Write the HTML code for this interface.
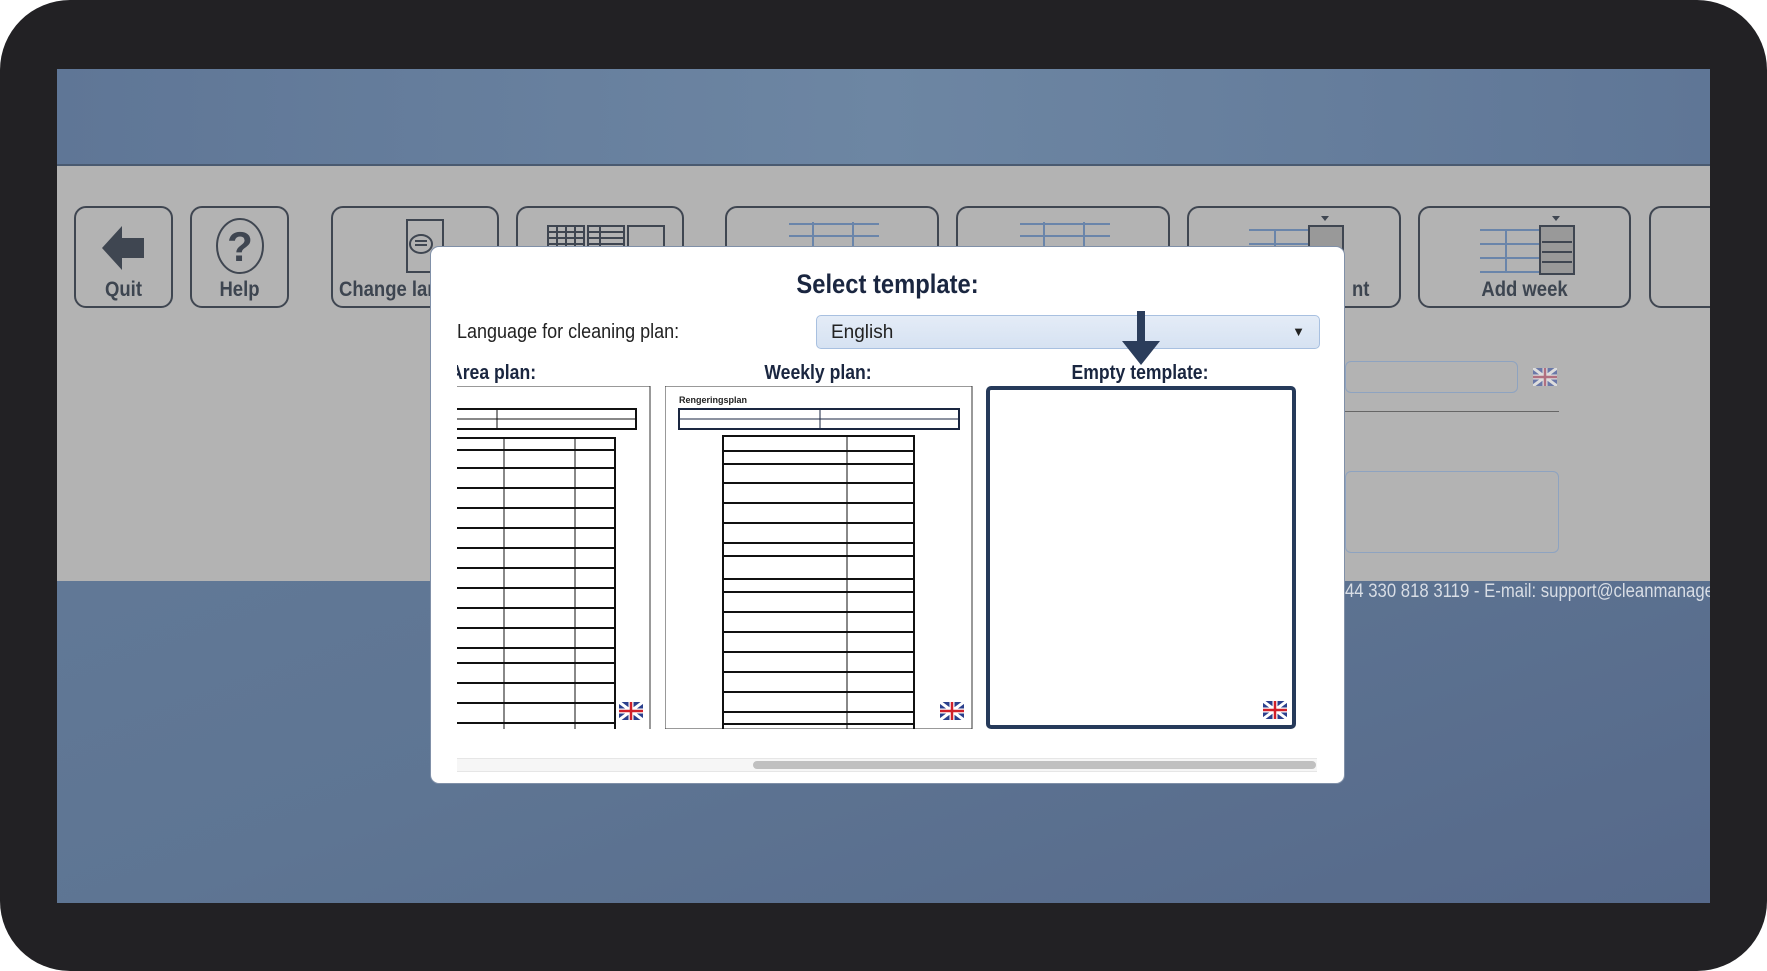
<!DOCTYPE html>
<html><head><meta charset="utf-8"><style>
*{margin:0;padding:0;box-sizing:border-box}
body{width:1767px;height:971px;overflow:hidden;background:#fff;font-family:"Liberation Sans",sans-serif;position:relative}
.frame{position:absolute;left:0;top:0;width:1767px;height:971px;background:#222124;border-radius:70px}
.screen{position:absolute;left:57px;top:69px;width:1653px;height:834px;overflow:hidden;background:linear-gradient(160deg,#667d9b 0%,#5e7593 60%,#56698a 100%)}
.hdr{position:absolute;left:0;top:0;width:100%;height:97px;background:linear-gradient(90deg,#5f7696,#6d86a3 50%,#5f7696);border-bottom:2px solid #4a5a70}
.gray{position:absolute;left:0;top:97px;width:100%;height:415px;background:#b3b3b3}
.btn{position:absolute;top:137px;height:102px;border:2px solid #3f4651;border-radius:12px;color:#3d4550;font-weight:bold;font-size:21px;text-align:center}
.btn span{position:absolute;bottom:4px;left:0;right:0;white-space:nowrap;transform:scaleX(0.88)}
.foot{position:absolute;left:1288px;top:512px;color:#d8dde5;font-size:19px;white-space:nowrap;transform:scaleX(0.88);transform-origin:left}
.modal{position:absolute;left:430px;top:246px;width:915px;height:538px;background:#fff;border-radius:9px;border:1px solid #8090a8}
.t{position:absolute;color:#1a2640;font-weight:bold;white-space:nowrap}
</style></head><body>
<div class="frame"></div>
<div class="screen">
 <div class="hdr"></div>
 <div class="gray"></div>
 <div class="btn" style="left:17px;width:99px"><svg width="60" height="60" style="margin-top:10px" viewBox="0 0 60 60"><path d="M8 30 L28 8 L28 20 L50 20 L50 40 L28 40 L28 52Z" fill="#3f4651"/></svg><span>Quit</span></div>
 <div class="btn" style="left:133px;width:99px"><svg width="60" height="60" style="margin-top:8px" viewBox="0 0 60 60"><ellipse cx="30" cy="30" rx="23" ry="27" fill="none" stroke="#3f4651" stroke-width="2"/><text x="30" y="45" text-anchor="middle" font-size="42" font-weight="bold" fill="#3f4651" font-family="Liberation Sans">?</text></svg><span>Help</span></div>
 <div class="btn" style="left:274px;width:168px"><svg width="44" height="60" style="margin-top:8px;margin-left:20px" viewBox="0 0 44 60"><rect x="4" y="4" width="36" height="52" fill="none" stroke="#3f4651" stroke-width="2"/><ellipse cx="18" cy="28" rx="11" ry="9" fill="none" stroke="#3f4651" stroke-width="2"/><path d="M12 25h12M12 29h12" stroke="#3f4651" stroke-width="2"/></svg><span style="text-align:left;left:6px;transform-origin:left">Change language</span></div>
 <div class="btn" style="left:459px;width:168px"><svg width="140" height="40" viewBox="0 0 140 40" style="margin-top:6px"><g fill="none" stroke="#3f4651" stroke-width="2"><rect x="18" y="12" width="36" height="30"/><rect x="58" y="12" width="36" height="30"/><rect x="98" y="12" width="36" height="30"/><path d="M18 18h36M18 24h36M18 30h36M27 12v30M36 12v30M45 12v30M58 18h36M58 24h36M58 30h36M70 12v30"/></g></svg></div>
 <div class="btn" style="left:668px;width:214px"><svg width="110" height="40" viewBox="0 0 110 40" style="margin-top:6px"><g stroke="#6a85aa" stroke-width="2"><path d="M12 10h90M12 22h90M12 34h90M36 8v32M76 8v32"/></g></svg></div>
 <div class="btn" style="left:899px;width:214px"><svg width="110" height="40" viewBox="0 0 110 40" style="margin-top:6px"><g stroke="#6a85aa" stroke-width="2"><path d="M12 10h90M12 22h90M12 34h90M36 8v32M76 8v32"/></g></svg></div>
 <div class="btn" style="left:1130px;width:214px"><svg width="110" height="40" viewBox="0 0 110 40" style="margin-top:4px"><g stroke="#6a85aa" stroke-width="2"><path d="M10 18h60M10 32h60M36 18v22"/></g><rect x="70" y="14" width="34" height="30" fill="#999" stroke="#3f4651" stroke-width="2"/><path d="M82 4h8l-4 5z" fill="#3f4651"/></svg><span style="left:160px;text-align:left">nt</span></div>
 <div class="btn" style="left:1361px;width:213px"><svg width="110" height="64" viewBox="0 0 110 64" style="margin-top:4px"><g stroke="#6a85aa" stroke-width="2"><line x1="10" y1="18" x2="70" y2="18"/><line x1="10" y1="32" x2="70" y2="32"/><line x1="10" y1="46" x2="70" y2="46"/><line x1="10" y1="60" x2="70" y2="60"/><line x1="36" y1="18" x2="36" y2="60"/></g><rect x="70" y="14" width="34" height="48" fill="#999" stroke="#3f4651" stroke-width="2"/><path d="M72 30h30M72 40h30M72 50h30" stroke="#3f4651" stroke-width="2"/><path d="M82 4h8l-4 5z" fill="#3f4651"/></svg><span>Add week</span></div>
 <div class="btn" style="left:1592px;width:100px"></div>
 <div style="position:absolute;left:1288px;top:292px;width:173px;height:32px;border:1px solid #8ea3c0;border-radius:6px"></div>
 <svg style="position:absolute;left:1476px;top:299px" width="24" height="18"><rect width="24" height="18" fill="#6a78a8"/><path d="M0 0l24 18M24 0L0 18" stroke="#ddd" stroke-width="3"/><path d="M12 0v18M0 9h24" stroke="#ddd" stroke-width="5"/><path d="M12 0v18M0 9h24" stroke="#b07080" stroke-width="2.5"/></svg>
 <div style="position:absolute;left:1288px;top:342px;width:214px;height:1px;background:#666"></div>
 <div style="position:absolute;left:1288px;top:402px;width:214px;height:82px;border:1px solid #8ea3c0;border-radius:6px"></div>
 <div class="foot">44 330 818 3119 - E-mail: support@cleanmanagement</div>
</div>
<div class="modal">
 <div class="t" style="left:0;right:0;text-align:center;top:22px;font-size:27px;transform:scaleX(0.88)">Select template:</div>
 <div style="position:absolute;left:26px;top:74px;font-size:20px;color:#222;transform:scaleX(0.9);transform-origin:left">Language for cleaning plan:</div>
 <div style="position:absolute;left:385px;top:68px;width:504px;height:34px;background:linear-gradient(#e4ecf7,#d6e2f2);border:1px solid #a8c0e0;border-radius:5px;font-size:19px;color:#222;padding:6px 14px">English<span style="position:absolute;right:14px;top:8px;font-size:13px">▼</span></div>
 <svg style="position:absolute;left:690px;top:64px" width="40" height="56" viewBox="0 0 40 56"><rect x="16" y="0" width="8" height="32" fill="#2b3d5b"/><path d="M1 30h38l-19 24z" fill="#2b3d5b"/></svg>
 <div style="position:absolute;left:26px;top:112px;width:150px;height:28px;overflow:hidden"><div class="t" style="left:-7px;top:3px;font-size:20px;transform:scaleX(0.88);transform-origin:left">Area plan:</div></div>
 <div class="t" style="left:287px;width:200px;text-align:center;top:115px;font-size:20px;transform:scaleX(0.88)">Weekly plan:</div>
 <div class="t" style="left:559px;width:300px;text-align:center;top:115px;font-size:20px;transform:scaleX(0.88)">Empty template:</div>
 <svg style="position:absolute;left:26px;top:139px" width="195" height="343" viewBox="0 0 195 343">
  <rect x="0" y="0" width="194" height="343" fill="#fff"/><line x1="193" y1="0" x2="193" y2="343" stroke="#333"/><line x1="0" y1="0" x2="193" y2="0" stroke="#333"/>
  <rect x="-2" y="23" width="181" height="20" fill="none" stroke="#111" stroke-width="2"/><line x1="0" y1="33" x2="179" y2="33" stroke="#111"/><line x1="40" y1="23" x2="40" y2="43" stroke="#111"/>
  <g stroke="#111" fill="none"><rect x="-2" y="52" width="160" height="300" stroke-width="2"/><line x1="47" y1="52" x2="47" y2="343"/><line x1="118" y1="52" x2="118" y2="343"/>
  <g stroke-width="2"><line x1="0" y1="64" x2="158" y2="64"/><line x1="0" y1="82" x2="158" y2="82"/><line x1="0" y1="102" x2="158" y2="102"/><line x1="0" y1="122" x2="158" y2="122"/><line x1="0" y1="142" x2="158" y2="142"/><line x1="0" y1="162" x2="158" y2="162"/><line x1="0" y1="182" x2="158" y2="182"/><line x1="0" y1="202" x2="158" y2="202"/><line x1="0" y1="222" x2="158" y2="222"/><line x1="0" y1="242" x2="158" y2="242"/><line x1="0" y1="262" x2="158" y2="262"/><line x1="0" y1="277" x2="158" y2="277"/><line x1="0" y1="297" x2="158" y2="297"/><line x1="0" y1="317" x2="158" y2="317"/><line x1="0" y1="337" x2="158" y2="337"/></g></g>
  <rect x="162" y="316" width="24" height="18" fill="#2a3f8c"/><path d="M162 316l24 18M186 316l-24 18" stroke="#fff" stroke-width="3"/><path d="M174 316v18M162 325h24" stroke="#fff" stroke-width="5"/><path d="M174 316v18M162 325h24" stroke="#d0202a" stroke-width="2.5"/>
 </svg>
 <svg style="position:absolute;left:234px;top:139px" width="308" height="343" viewBox="0 0 308 343">
  <rect x="0" y="0" width="307" height="343" fill="#fff" stroke="#333"/>
  <text x="14" y="17" font-size="9" font-weight="bold" fill="#222" font-family="Liberation Sans">Rengeringsplan</text>
  <rect x="14" y="23" width="280" height="20" fill="none" stroke="#1a2640" stroke-width="2"/><line x1="14" y1="33" x2="294" y2="33" stroke="#1a2640"/><line x1="155" y1="23" x2="155" y2="43" stroke="#1a2640"/>
  <g stroke="#111" fill="none"><rect x="58" y="50" width="191" height="300" stroke-width="2"/><line x1="182" y1="50" x2="182" y2="343"/>
  <g stroke-width="2"><line x1="58" y1="65" x2="249" y2="65"/><line x1="58" y1="78" x2="249" y2="78"/><line x1="58" y1="97" x2="249" y2="97"/><line x1="58" y1="117" x2="249" y2="117"/><line x1="58" y1="137" x2="249" y2="137"/><line x1="58" y1="157" x2="249" y2="157"/><line x1="58" y1="170" x2="249" y2="170"/><line x1="58" y1="193" x2="249" y2="193"/><line x1="58" y1="206" x2="249" y2="206"/><line x1="58" y1="226" x2="249" y2="226"/><line x1="58" y1="246" x2="249" y2="246"/><line x1="58" y1="266" x2="249" y2="266"/><line x1="58" y1="286" x2="249" y2="286"/><line x1="58" y1="306" x2="249" y2="306"/><line x1="58" y1="326" x2="249" y2="326"/><line x1="58" y1="338" x2="249" y2="338"/></g></g>
  <rect x="275" y="316" width="24" height="18" fill="#2a3f8c"/><path d="M275 316l24 18M299 316l-24 18" stroke="#fff" stroke-width="3"/><path d="M287 316v18M275 325h24" stroke="#fff" stroke-width="5"/><path d="M287 316v18M275 325h24" stroke="#d0202a" stroke-width="2.5"/>
 </svg>
 <div style="position:absolute;left:555px;top:139px;width:310px;height:343px;border:4px solid #263a5a;border-radius:5px;background:#fff"></div>
 <svg style="position:absolute;left:832px;top:454px" width="24" height="18"><rect width="24" height="18" fill="#2a3f8c"/><path d="M0 0l24 18M24 0L0 18" stroke="#fff" stroke-width="3"/><path d="M12 0v18M0 9h24" stroke="#fff" stroke-width="5"/><path d="M12 0v18M0 9h24" stroke="#d0202a" stroke-width="2.5"/></svg>
 <div style="position:absolute;left:26px;top:511px;width:860px;height:14px;background:#f6f6f6;border-top:1px solid #e6e6e6;border-bottom:1px solid #e6e6e6"></div>
 <div style="position:absolute;left:322px;top:514px;width:563px;height:8px;background:#c0c0c0;border-radius:4px"></div>
</div>
</body></html>
